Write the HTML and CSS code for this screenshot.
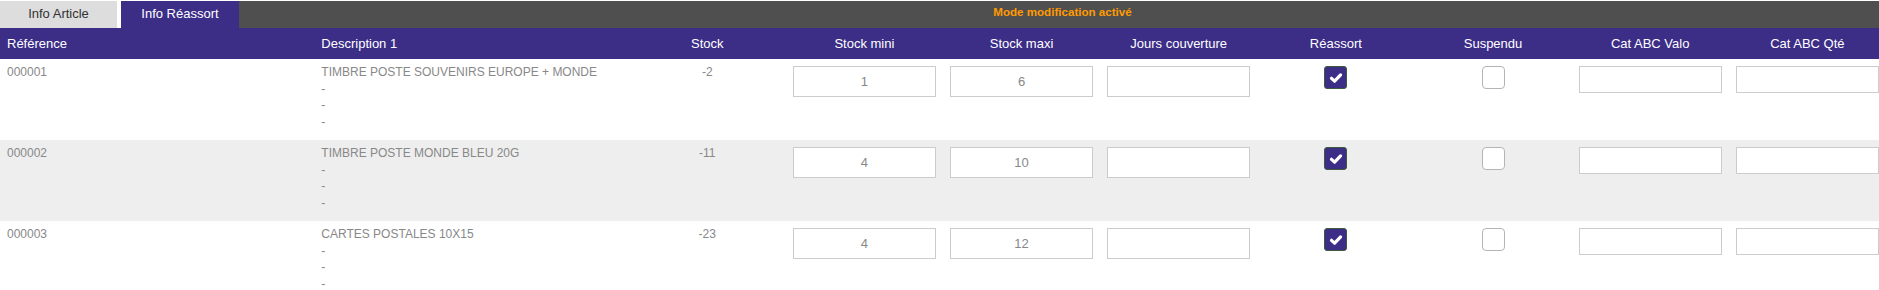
FILE: index.html
```html
<!DOCTYPE html>
<html lang="fr">
<head>
    <meta charset="UTF-8">
    <title>Info Réassort</title>
    <link rel="stylesheet" href="styles.css">
</head>
<body>
    <div class="page">
        <!-- Tabs -->
        <div class="tab-bar">
            <div class="tab">Info Article</div>
            <div class="tab tab-active">Info Réassort</div>
            <div class="mode-bar">Mode modification activé</div>
        </div>

        <!-- Table -->
        <table class="reassort">
            <colgroup>
                <col class="col-wide">
                <col class="col-wide">
                <col class="col-num"><col class="col-num"><col class="col-num"><col class="col-num">
                <col class="col-num"><col class="col-num"><col class="col-num"><col class="col-num">
            </colgroup>
            <tr>
                <th class="left">Référence</th>
                <th class="left">Description 1</th>
                <th>Stock</th>
                <th>Stock mini</th>
                <th>Stock maxi</th>
                <th>Jours couverture</th>
                <th>Réassort</th>
                <th>Suspendu</th>
                <th>Cat ABC Valo</th>
                <th>Cat ABC Qté</th>
            </tr>
            <tr>
                <td>000001</td>
                <td>
                    <div class="line">TIMBRE POSTE SOUVENIRS EUROPE + MONDE</div>
                    <div class="line">-</div>
                    <div class="line">-</div>
                    <div class="line">-</div>
                </td>
                <td class="center">-2</td>
                <td><input class="field" type="text" value="1"></td>
                <td><input class="field" type="text" value="6"></td>
                <td><input class="field" type="text" value=""></td>
                <td class="center"><span class="check on"><svg viewBox="0 0 16 16" width="16" height="16"><path d="M3.5 8.3 L6.6 11.2 L12.6 4.9" fill="none" stroke="#fff" stroke-width="3.2" stroke-linecap="round" stroke-linejoin="round"/></svg></span></td>
                <td class="center"><span class="check"></span></td>
                <td><input class="field field-small" type="text" value=""></td>
                <td><input class="field field-small" type="text" value=""></td>
            </tr>
            <tr class="alt">
                <td>000002</td>
                <td>
                    <div class="line">TIMBRE POSTE MONDE BLEU 20G</div>
                    <div class="line">-</div>
                    <div class="line">-</div>
                    <div class="line">-</div>
                </td>
                <td class="center">-11</td>
                <td><input class="field" type="text" value="4"></td>
                <td><input class="field" type="text" value="10"></td>
                <td><input class="field" type="text" value=""></td>
                <td class="center"><span class="check on"><svg viewBox="0 0 16 16" width="16" height="16"><path d="M3.5 8.3 L6.6 11.2 L12.6 4.9" fill="none" stroke="#fff" stroke-width="3.2" stroke-linecap="round" stroke-linejoin="round"/></svg></span></td>
                <td class="center"><span class="check"></span></td>
                <td><input class="field field-small" type="text" value=""></td>
                <td><input class="field field-small" type="text" value=""></td>
            </tr>
            <tr>
                <td>000003</td>
                <td>
                    <div class="line">CARTES POSTALES 10X15</div>
                    <div class="line">-</div>
                    <div class="line">-</div>
                    <div class="line">-</div>
                </td>
                <td class="center">-23</td>
                <td><input class="field" type="text" value="4"></td>
                <td><input class="field" type="text" value="12"></td>
                <td><input class="field" type="text" value=""></td>
                <td class="center"><span class="check on"><svg viewBox="0 0 16 16" width="16" height="16"><path d="M3.5 8.3 L6.6 11.2 L12.6 4.9" fill="none" stroke="#fff" stroke-width="3.2" stroke-linecap="round" stroke-linejoin="round"/></svg></span></td>
                <td class="center"><span class="check"></span></td>
                <td><input class="field field-small" type="text" value=""></td>
                <td><input class="field field-small" type="text" value=""></td>
            </tr>
        </table>
    </div>
</body>
</html>
```

FILE: styles.css
```css
:root {
    --purple: #3c2d87;
    --dark: #4f4f4f;
    --tab-light: #dddddd;
    --row-alt: #eeeeee;
    --text-grey: #888888;
    --border: #cccccc;
    --orange: #ff9a00;
}

* {
    margin: 0;
    padding: 0;
    box-sizing: border-box;
}

html, body {
    overflow: hidden;
    background: #ffffff;
}

body {
    font-family: 'Liberation Sans', Arial, sans-serif;
    font-size: 13px;
    color: var(--text-grey);
}

.page {
    width: 1886px;
    padding-top: 1px;
}

/* Tabs */
.tab-bar {
    display: flex;
    height: 27px;
}

.tab {
    width: 117px;
    background-color: var(--tab-light);
    color: #333333;
    text-align: center;
    line-height: 25px;
}

.tab-active {
    width: 118px;
    margin-left: 4px;
    background-color: var(--purple);
    color: #ffffff;
}

.mode-bar {
    width: 1647px;
    background-color: var(--dark);
    color: var(--orange);
    font-weight: bold;
    font-size: 11.6px;
    text-align: center;
    line-height: 22px;
}

/* Table */
table.reassort {
    width: 1886px;
    table-layout: fixed;
    border-collapse: collapse;
}

.col-wide {
    width: 314px;
}

.col-num {
    width: 157px;
}

th {
    height: 31px;
    background-color: var(--purple);
    color: #ffffff;
    font-weight: normal;
    text-align: center;
    padding: 0 7px;
    vertical-align: middle;
}

th.left {
    text-align: left;
}

td {
    height: 81px;
    padding: 5px 7px 9px;
    vertical-align: top;
    font-size: 12px;
    line-height: 17px;
}

td.center {
    text-align: center;
}

tr.alt td {
    background-color: var(--row-alt);
}

.line {
    line-height: 16.7px;
}

.field {
    display: block;
    width: 143px;
    height: 31px;
    margin: 2px auto 0;
    border: 1px solid var(--border);
    background: #ffffff;
    font-family: 'Liberation Sans', Arial, sans-serif;
    font-size: 13px;
    color: var(--text-grey);
    text-align: center;
    outline: none;
}

.field-small {
    height: 27px;
}

.check {
    display: inline-flex;
    align-items: center;
    justify-content: center;
    width: 23px;
    height: 23px;
    margin-top: 2px;
    border: 1px solid #b5b5b5;
    border-radius: 4px;
    background: #ffffff;
    vertical-align: top;
}

.check.on {
    background-color: var(--purple);
    border-color: #3d5a3a;
    border-radius: 3px;
}
```
